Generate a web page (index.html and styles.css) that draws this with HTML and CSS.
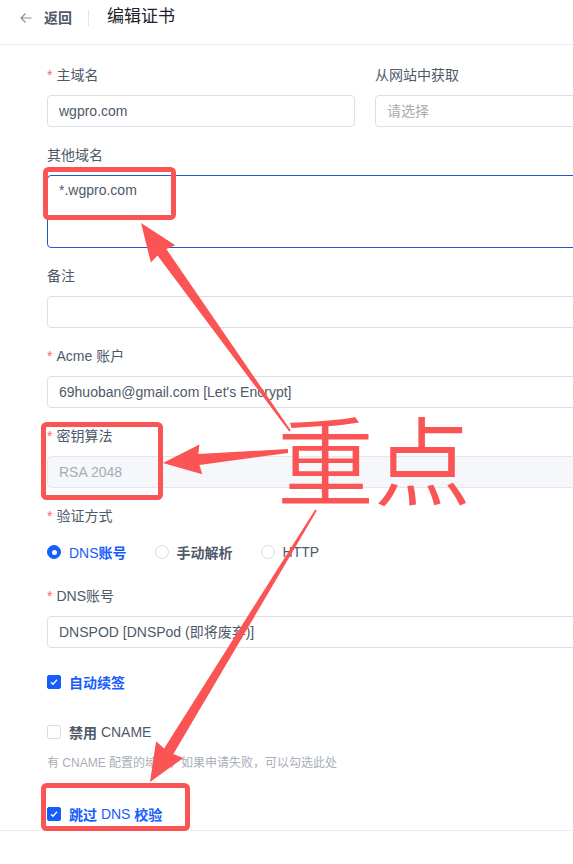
FILE: index.html
```html
<!DOCTYPE html>
<html lang="zh-CN">
<head>
    <meta charset="UTF-8">
    <meta name="viewport" content="width=device-width, initial-scale=1.0">
    <title>编辑证书</title>
    <link rel="stylesheet" href="styles.css">
</head>
<body>

    <!-- 顶部 -->
    <div class="page-header">
        <span class="back">
            <svg width="12" height="12" viewBox="0 0 12 12"><path d="M11.5 6H1M5.5 1.5L1 6l4.5 4.5" fill="none" stroke="#86909c" stroke-width="1.2"/></svg>
            <b>返回</b>
        </span>
        <span class="divider"></span>
        <h1 class="page-title">编辑证书</h1>
    </div>

    <!-- 表单 -->
    <div class="form">
        <div class="row">
            <div class="item">
                <div class="label req">主域名</div>
                <div class="input">wgpro.com</div>
            </div>
            <div class="item">
                <div class="label">从网站中获取</div>
                <div class="input placeholder">请选择</div>
            </div>
        </div>

        <div class="item">
            <div class="label">其他域名</div>
            <div class="input textarea">*.wgpro.com</div>
        </div>

        <div class="item">
            <div class="label">备注</div>
            <div class="input"></div>
        </div>

        <div class="item">
            <div class="label req">Acme 账户</div>
            <div class="input">69huoban@gmail.com [Let's Encrypt]</div>
        </div>

        <div class="item">
            <div class="label req">密钥算法</div>
            <div class="input disabled">RSA 2048</div>
        </div>

        <div class="item">
            <div class="label req">验证方式</div>
            <div class="radios">
                <span class="radio checked"><i class="dot"></i><span>DNS<b>账号</b></span></span>
                <span class="radio"><i class="dot"></i><span><b>手动解析</b></span></span>
                <span class="radio"><i class="dot"></i><span>HTTP</span></span>
            </div>
        </div>

        <div class="item">
            <div class="label req">DNS账号</div>
            <div class="input">DNSPOD [DNSPod (即将废弃)]</div>
        </div>

        <div class="item">
            <span class="check on"><i class="box"><svg width="10" height="10" viewBox="0 0 10 10"><path d="M2 5.2l2 2 4-4.4" fill="none" stroke="#fff" stroke-width="1.3"/></svg></i><b>自动续签</b></span>
        </div>

        <div class="item item-help">
            <span class="check"><i class="box"></i><b>禁用</b>&nbsp;CNAME</span>
            <div class="help">有 CNAME 配置的域名，如果申请失败，可以勾选此处</div>
        </div>

        <div class="item last">
            <span class="check on"><i class="box"><svg width="10" height="10" viewBox="0 0 10 10"><path d="M2 5.2l2 2 4-4.4" fill="none" stroke="#fff" stroke-width="1.3"/></svg></i><b>跳过</b>&nbsp;DNS&nbsp;<b>校验</b></span>
        </div>
    </div>

    <div class="footer"></div>

    <!-- 标注 -->
    <div class="annot">
        <svg width="573" height="864" viewBox="0 0 573 864">
            <g fill="none" stroke="#fb5454" stroke-width="5">
                <rect x="45.5" y="169.5" width="128" height="48" rx="3"/>
                <rect x="43.5" y="424.5" width="117" height="73" rx="3"/>
                <rect x="43.5" y="785.5" width="144" height="43" rx="3"/>
            </g>
            <g fill="#fb5454">
                <polygon points="290.8,430.4 166.4,249.1 175.3,245.2 141,223 150.9,262.6 157.5,255.5 289.2,431.6"/>
                <polygon points="287.8,449 198.3,454.1 199.4,444.4 163,463 202.3,474.3 199.4,465 288.2,453"/>
                <polygon points="315.2,509.5 164.1,748.4 156.1,741.2 150,782 183.4,757.9 173.4,754.1 316.9,510.5"/>
            </g>
        </svg>
        <div class="mark">重点</div>
    </div>

</body>
</html>
```

FILE: styles.css
```css
html, body { margin: 0; }
body { position: relative; width: 573px; height: 864px; overflow: hidden; background: #fff; font-family: "Liberation Sans", "Noto Sans CJK SC", sans-serif; font-size: 14px; color: #4e5969; }
b { font-weight: bold; }

.page-header { display: flex; align-items: flex-start; height: 45px; box-sizing: border-box; padding: 6px 0 0 20px; border-bottom: 1px solid #ebedf0; }
.back { display: flex; align-items: center; gap: 12px; line-height: 24px; color: #4e5969; }
.divider { width: 1px; height: 16px; background: #e5e6eb; margin: 4px 18px 0 16px; }
.page-title { margin: 0; font-size: 17px; font-weight: normal; line-height: 22px; color: #1d2129; }

.form { width: 636px; padding: 20px 0 0 47px; }
.row { display: flex; gap: 20px; }
.row .item { flex: 1; }
.item { margin-bottom: 18px; }
.label { line-height: 21px; margin-bottom: 9px; }
.req::before { content: "*"; color: #f76560; margin-right: 4px; }

.input { height: 32px; box-sizing: border-box; border: 1px solid #dcdfe6; border-radius: 4px; padding: 0 11px; line-height: 30px; color: #4e5969; }
.input.placeholder { color: #a8abb2; }
.input.disabled { background: #f5f7fa; border-color: #e4e7ed; color: #a8abb2; }
.input.textarea { height: 73px; padding: 4px 11px; line-height: 20px; border-color: #1c5ad4; }

.radios { display: flex; align-items: center; height: 32px; }
.radio { display: flex; align-items: center; gap: 8px; margin-right: 28px; }
.dot { position: relative; width: 14px; height: 14px; box-sizing: border-box; border: 1px solid #d9dce3; border-radius: 50%; }
.radio.checked { color: #165dff; }
.radio.checked .dot { background: #165dff; border-color: #165dff; }
.radio.checked .dot::after { content: ""; position: absolute; left: 3.5px; top: 3.5px; width: 5px; height: 5px; border-radius: 50%; background: #fff; }

.check { display: flex; align-items: center; height: 32px; }
.box { display: flex; align-items: center; justify-content: center; width: 14px; height: 14px; margin-right: 8px; box-sizing: border-box; border: 1px solid #d9dce3; border-radius: 2px; }
.check.on { color: #165dff; }
.check.on .box { background: #165dff; border-color: #165dff; }

.item-help { margin-bottom: 25px; }
.help { margin-top: 5px; font-size: 12px; line-height: 20px; color: #a9aeb8; }
.item.last { margin-bottom: 0; }

.footer { height: 40px; border-top: 1px solid #eceef2; }

.annot { position: absolute; left: 0; top: 0; width: 573px; height: 864px; pointer-events: none; }
.annot svg { display: block; }
.mark { position: absolute; left: 277px; top: 407px; font-family: "Noto Sans CJK SC", sans-serif; font-size: 97px; font-weight: 350; line-height: 1; color: #fb5454; }
```
